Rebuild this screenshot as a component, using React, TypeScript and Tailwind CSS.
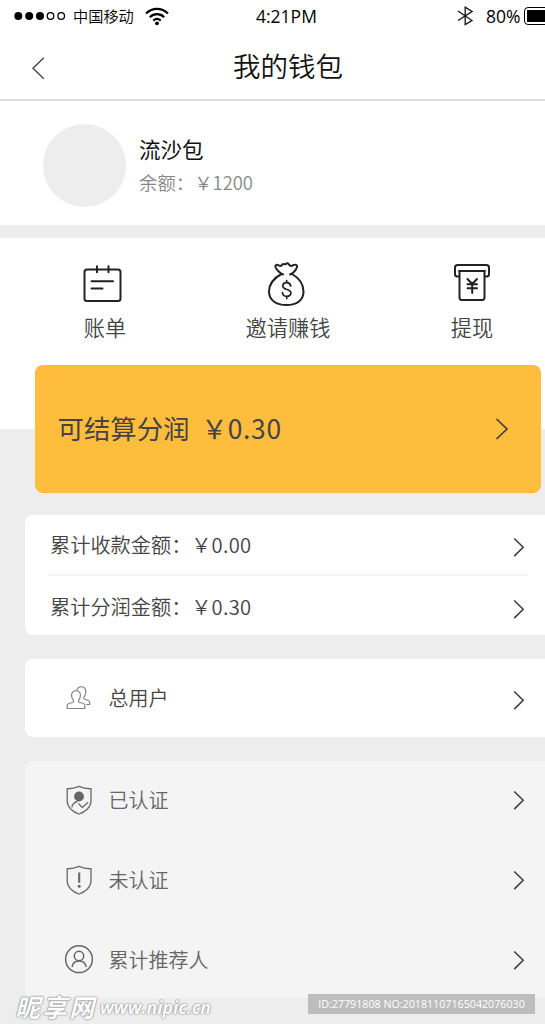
import React from 'react';

const cjk = "font-['Noto_Sans_CJK_SC','Noto_Sans',sans-serif]";

function Chevron({ className = '' }: { className?: string }) {
  return (
    <svg className={className} width="12" height="20" viewBox="0 0 12 20" fill="none" stroke="#3c3c3c" strokeWidth="1.5">
      <path d="M1.2 1.5 10.2 10.300 1.2 19.100" />
    </svg>
  );
}

function BillIcon() {
  return (
    <svg width="40" height="40" viewBox="0 0 40 40" fill="none" stroke="#222" strokeWidth="2" strokeLinecap="round">
      <rect x="2.500" y="4.500" width="36" height="31.500" rx="2.500" />
      <path d="M15 1.200v6M26.500 1.200v6M9.500 16.200h21.500M9.500 23.400h11" />
    </svg>
  );
}

function MoneyBagIcon() {
  return (
    <svg width="40" height="46" viewBox="0 0 40 46" fill="none" stroke="#222" strokeWidth="2" strokeLinecap="round" strokeLinejoin="round">
      <path d="M15.500 12C8 16 3 22.500 3 29.500 3 38 10 43 20.500 43S37.500 38 37.500 29.500C37.500 22.500 33 16 26 12" />
      <path d="M17 12.500C14.500 11.500 10.500 8 9.500 5 9 3 11 2.200 12.700 3.300 14 4.100 15.400 4 16.200 2.700 17.400 1 18.700 3.300 20 1.800 21 .5 22.300 1.400 23 2.700 24.200 4.400 26 4 27.200 3.200 29 2 31.600 3 31 5 30.200 8 27 11.500 24 12.500" />
      <path d="M24.800 24C24.300 21.600 22.900 20.700 20.700 20.700 18.300 20.700 16.800 22 16.800 24 16.800 28.400 24.900 26.500 24.900 31 24.900 33.200 23.200 34.300 20.700 34.300 18.200 34.300 16.700 33 16.500 30.700M20.700 18.500v2M20.700 34.500v2" strokeWidth="1.700" />
    </svg>
  );
}

function WithdrawIcon() {
  return (
    <svg width="38" height="40" viewBox="0 0 38 40" fill="none" stroke="#222" strokeWidth="2" strokeLinecap="round" strokeLinejoin="round">
      <path d="M6 13.500H4.500Q2 13.500 2 11V4.500Q2 2 4.500 2H33.500Q36 2 36 4.500v6.500Q36 13.500 33.500 13.500H32" />
      <path d="M6 8H32M6.500 8V34.500Q6.500 37 9 37H29Q31.500 37 31.500 34.500V8" />
      <path d="M14.500 16 19.200 21 24 16M19.200 21V30M14.500 21.200h9.500M14.500 25.300h9.500" />
    </svg>
  );
}

function UsersIcon() {
  return (
    <svg width="28" height="28" viewBox="0 0 28 28" fill="none" stroke="#858585" strokeWidth="1.200" strokeLinejoin="round">
      <path d="M2.200 24.500V21.500Q2.200 20 4 19.500L7.500 18.500Q9.300 17.800 8.300 16.200C6.500 13.500 6.200 11 7 9 8.500 5.800 13.500 5.800 15 9 15.800 11 15.400 13.500 13.800 16.200 12.900 17.800 14.300 18.300 15 18.500L18.500 19.500Q19.800 20 19.800 21.500V24.500Z" />
      <path d="M11.800 6C13 2 19 1.500 20.500 5.500 21.500 8.500 20.500 11 18.800 13.500Q18.300 14.800 19.500 15.300L23.200 16.500Q24.700 17 24.700 18.500V20.500H21" />
    </svg>
  );
}

function Shield() {
  return <path d="M14 1.300Q8 4 2.200 3.700V16C2.200 22 7.500 27 14 29 20.500 27 26 22 26 16V3.700Q20 4 14 1.300Z" />;
}

function VerifiedIcon() {
  return (
    <svg width="28" height="30" viewBox="0 0 28 30" fill="none" stroke="#6a6a6a" strokeWidth="1.300" strokeLinejoin="round">
      <Shield />
      <circle cx="14" cy="11.500" r="4.900" fill="#666" stroke="none" />
      <path d="M6.800 22.300C7.500 19 9.500 17.200 12.500 16.500M13.500 18.500 17.300 22.600 23.200 17.200" />
    </svg>
  );
}

function UnverifiedIcon() {
  return (
    <svg width="28" height="30" viewBox="0 0 28 30" fill="none" stroke="#6a6a6a" strokeWidth="1.300" strokeLinejoin="round">
      <Shield />
      <path d="M14.200 7.500v10.300" strokeWidth="2.100" />
      <circle cx="14.200" cy="21.200" r="1.500" fill="#666" stroke="none" />
    </svg>
  );
}

function ReferrerIcon() {
  return (
    <svg width="30" height="30" viewBox="0 0 30 30" fill="none" stroke="#666" strokeWidth="1.500" strokeLinecap="round">
      <circle cx="15" cy="14.200" r="13.400" />
      <circle cx="15" cy="11" r="4.700" />
      <path d="M8.200 21.400C8.800 17.700 11 15.900 15 15.900S21.300 17.700 22 21.400" />
    </svg>
  );
}

function StatusBar() {
  return (
    <div className="flex h-8 items-center font-normal text-black">
      <svg className="-mt-[1px] ml-[13px]" width="54" height="12" viewBox="0 0 54 12" fill="none" stroke="#000" strokeWidth="1.300">
        <circle cx="5.300" cy="6" r="4" fill="#000" stroke="none" />
        <circle cx="16.200" cy="6" r="4" fill="#000" stroke="none" />
        <circle cx="27" cy="6" r="4" fill="#000" stroke="none" />
        <circle cx="37.500" cy="6" r="3.300" />
        <circle cx="48.200" cy="6" r="3.300" />
      </svg>
      <span className="-mt-[3px] ml-[6px] w-[66px] text-[15.200px] leading-8 font-[350] whitespace-nowrap">中国移动</span>
      <svg className="-mt-[1px] ml-[5px]" width="26" height="20" viewBox="0 0 26 20" fill="none" stroke="#000" strokeWidth="2.200">
        <path d="M2 7.500C8.500 1.200 17.500 1.200 24 7.500M5.800 11.200C10 7.200 16 7.200 20.200 11.200M9.300 14.600C11.500 12.500 14.500 12.500 16.700 14.600" />
        <circle cx="13" cy="17.300" r="1.900" fill="#000" stroke="none" />
      </svg>
      <span className="ml-[86px] w-[66px] font-['Open_Sans','Noto_Sans',sans-serif] text-[17.500px] leading-8">4:21PM</span>
      <svg className="-mt-[1px] ml-[135px]" width="16" height="20" viewBox="0 0 16 20" fill="none" stroke="#111" strokeWidth="1.300">
        <path d="M1 5 15 14.500 8.200 18.500V1.200L15 5.500 1 14.500" />
      </svg>
      <span className="ml-[13px] w-[37px] font-['Open_Sans','Noto_Sans',sans-serif] text-[17.500px] leading-8">80%</span>
      <div className="ml-[1px] h-[18px] flex-1 overflow-hidden">
        <div className="h-[18px] w-[36px] rounded-[4px] border-[1.500px] border-black p-[2px]">
          <div className="h-full bg-black" />
        </div>
      </div>
    </div>
  );
}

function MenuRow({ icon, label, className, chevronClass }: { icon: React.ReactNode; label: string; className: string; chevronClass?: string }) {
  return (
    <div className={`flex items-center pr-[20px] pl-[38.500px] ${className}`}>
      <div className="flex w-[30px] justify-center">{icon}</div>
      <span className="ml-[15px] flex-1 text-[20px] leading-[30px]">{label}</span>
      <Chevron className={chevronClass} />
    </div>
  );
}

export default function App() {
  return (
    <div className={`relative h-[1024px] w-[545px] overflow-hidden bg-[#ededed] font-[350] ${cjk}`}>
      <header className="h-[101px] border-b-2 border-[#dedede] bg-white">
        <StatusBar />
        <div className="flex h-[66px] items-center">
          <svg className="mt-[6px] ml-[31px]" width="14" height="24" viewBox="0 0 14 24" fill="none" stroke="#444" strokeWidth="1.400">
            <path d="M12.800 1.800 2 12.300 12.800 22.800" />
          </svg>
          <h1 className="ml-[188px] text-[27.500px] leading-[40px] font-[350] text-[#111]">我的钱包</h1>
        </div>
      </header>

      <section className="flex h-[124px] bg-white pt-[23px] pl-[43px]">
        <div className="size-[83px] rounded-full bg-[#ededed]" />
        <div className="ml-[13px] pt-[9px]">
          <div className="text-[21.500px] leading-[32px] font-normal text-[#111]">流沙包</div>
          <div className="mt-[2px] text-[18.400px] leading-[30px] text-[#888]">余额：￥1200</div>
        </div>
      </section>

      <section className="mt-[13px] h-[191px] bg-white pt-[22px]">
        <div className="flex text-[21.200px] text-[#444]">
          <div className="ml-[65px] flex w-[80px] flex-col items-center">
            <div className="flex h-[50px] items-center pr-[6px]"><BillIcon /></div>
            <span className="mt-[1px] leading-[32px]">账单</span>
          </div>
          <div className="ml-[93px] flex w-[100px] flex-col items-center">
            <div className="flex h-[50px] items-center pr-[4px]"><MoneyBagIcon /></div>
            <span className="mt-[1px] leading-[32px]">邀请赚钱</span>
          </div>
          <div className="ml-[94px] flex w-[80px] flex-col items-center">
            <div className="flex h-[50px] items-center pb-[4px]"><WithdrawIcon /></div>
            <span className="mt-[1px] leading-[32px]">提现</span>
          </div>
        </div>
      </section>

      <section className="relative -mt-[64px] ml-[35px] flex h-[128px] w-[506px] items-center rounded-[8px] bg-[#ffbd3d] pr-[32px] pl-[22.500px] text-[#444]">
        <span className="-mt-[2px] flex-1 text-[26.400px] leading-[40px] font-normal whitespace-pre">
          可结算分润  ￥<span className="tracking-[0.700px]">0.30</span>
        </span>
        <svg width="14" height="24" viewBox="0 0 14 24" fill="none" stroke="#3f3f3f" strokeWidth="1.700">
          <path d="M1.500 2 12 12 1.500 22" />
        </svg>
      </section>

      <section className="mt-[22px] ml-[25px] h-[120px] rounded-l-[8px] bg-white text-[#444]">
        <div className="flex h-[59px] items-center pr-[20px] pl-[25px]">
          <span className="mt-[1px] flex-1 text-[20.200px] leading-[30px]">
            累计收款金额：￥<span className="tracking-[0.300px]">0.00</span>
          </span>
          <Chevron className="mt-[5px]" />
        </div>
        <div className="mr-[17px] ml-[23px] h-[2px] bg-[#f5f5f5]" />
        <div className="flex h-[59px] items-center pr-[20px] pl-[25px]">
          <span className="mt-[2px] flex-1 text-[20.200px] leading-[30px]">
            累计分润金额：￥<span className="tracking-[0.300px]">0.30</span>
          </span>
          <Chevron className="mt-[6px]" />
        </div>
      </section>

      <section className="mt-[24px] ml-[25px] rounded-l-[8px] bg-white text-[#444]">
        <MenuRow icon={<UsersIcon />} label="总用户" className="h-[78px]" chevronClass="mt-[4px]" />
      </section>

      <section className="mt-[24px] ml-[25px] h-[237px] rounded-l-[8px] bg-[#f4f4f4] text-[#666]">
        <MenuRow icon={<VerifiedIcon />} label="已认证" className="h-[77px]" />
        <div className="mr-[17px] ml-[23px] h-[1px] bg-[#f1f1f1]" />
        <MenuRow icon={<UnverifiedIcon />} label="未认证" className="h-[82px]" />
        <MenuRow icon={<ReferrerIcon />} label="累计推荐人" className="h-[77px]" />
      </section>

      <div className="absolute top-[990px] left-[15px] flex items-center text-white [text-shadow:0_0_1px_#888,0_0_1px_#888,0_0_2px_#999]">
        <span className="w-[85px] text-[25px] leading-[30px] font-bold tracking-[2px] whitespace-nowrap italic">昵享网</span>
        <span className="mt-[2px] font-['Open_Sans',sans-serif] text-[17.600px] leading-[30px] font-bold whitespace-nowrap italic">www.nipic.cn</span>
      </div>
      <div className="absolute top-[994px] left-[308px] h-[20px] w-[227px] bg-[#bdbdbd] text-center font-['Open_Sans',sans-serif] text-[10.700px] leading-[20px] font-normal whitespace-nowrap text-white">
        ID:27791808 NO:20181107165042076030
      </div>
    </div>
  );
}
